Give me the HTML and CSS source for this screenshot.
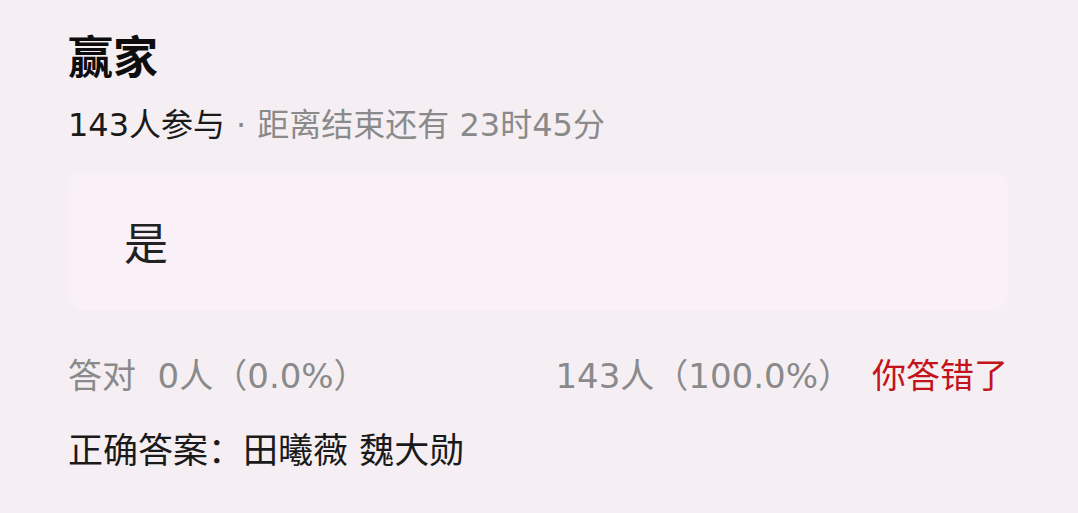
FILE: index.html
```html
<!DOCTYPE html>
<html lang="zh-CN">
<head>
    <meta charset="UTF-8">
    <meta name="viewport" content="width=device-width, initial-scale=1.0">
    <title>赢家</title>
    <link rel="stylesheet" href="styles.css">
</head>
<body>
    <div class="quiz">
        <h1 class="title">赢家</h1>
        <p class="meta">
            <span class="count">143人参与</span><span class="muted"><span class="dot">·</span>距离结束还有 23时45分</span>
        </p>
        <div class="option">
            <span class="option-text">是</span>
        </div>
        <div class="stats">
            <span class="muted">答对&nbsp;&nbsp;0人（0.0%）</span>
            <span class="result">
                <span class="muted">143人（100.0%）</span>
                <span class="wrong">你答错了</span>
            </span>
        </div>
        <p class="answer">正确答案：田曦薇 魏大勋</p>
    </div>
</body>
</html>
```

FILE: styles.css
```css
body {
    margin: 0;
    background: #f5eff4;
    font-family: "DejaVu Sans", "Noto Sans CJK SC", sans-serif;
    color: #1a1a1a;
}

.quiz {
    padding: 23px 70px 0 68px;
}

.title {
    margin: 0;
    font-family: "Noto Sans CJK SC", sans-serif;
    font-size: 45px;
    line-height: 64px;
    font-weight: 700;
    color: #0d0d0d;
}

.meta {
    margin: 14px 0 0;
    font-size: 32px;
    line-height: 48px;
}

.muted {
    color: #8a8a8a;
}

.dot {
    padding: 0 11px;
}

.option {
    margin-top: 23px;
    height: 138px;
    border-radius: 16px;
    background: #faf1f8;
    display: flex;
    align-items: center;
    padding-left: 56px;
}

.option-text {
    font-size: 44px;
    color: #222;
}

.stats {
    margin-top: 41px;
    display: flex;
    justify-content: space-between;
    font-size: 34px;
    line-height: 50px;
}

.result {
    display: flex;
    gap: 20px;
}

.wrong {
    color: #c3141b;
}

.answer {
    margin: 25px 0 0;
    font-size: 35px;
    line-height: 50px;
}
```
